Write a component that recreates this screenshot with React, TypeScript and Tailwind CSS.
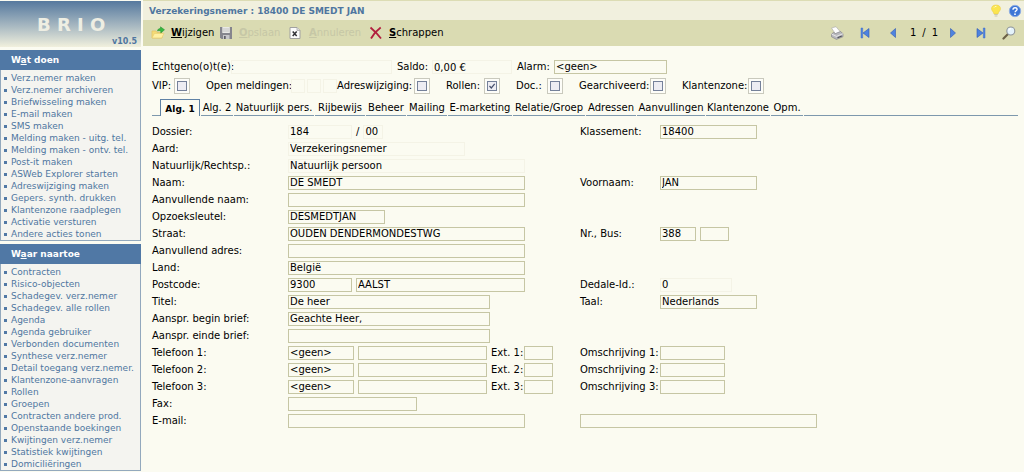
import type { ReactNode } from "react";
import { clsx } from "clsx";

const actions = [
  "Verz.nemer maken",
  "Verz.nemer archiveren",
  "Briefwisseling maken",
  "E-mail maken",
  "SMS maken",
  "Melding maken - uitg. tel.",
  "Melding maken - ontv. tel.",
  "Post-it maken",
  "ASWeb Explorer starten",
  "Adreswijziging maken",
  "Gepers. synth. drukken",
  "Klantenzone raadplegen",
  "Activatie versturen",
  "Andere acties tonen",
];

const destinations = [
  "Contracten",
  "Risico-objecten",
  "Schadegev. verz.nemer",
  "Schadegev. alle rollen",
  "Agenda",
  "Agenda gebruiker",
  "Verbonden documenten",
  "Synthese verz.nemer",
  "Detail toegang verz.nemer.",
  "Klantenzone-aanvragen",
  "Rollen",
  "Groepen",
  "Contracten andere prod.",
  "Openstaande boekingen",
  "Kwijtingen verz.nemer",
  "Statistiek kwijtingen",
  "Domiciliëringen",
];

const tabs = [
  { label: "Alg. 2", width: "w-8" },
  { label: "Natuurlijk pers.", width: "w-20" },
  { label: "Rijbewijs", width: "w-[50px]" },
  { label: "Beheer", width: "w-10" },
  { label: "Mailing", width: "w-10" },
  { label: "E-marketing", width: "w-16" },
  { label: "Relatie/Groep", width: "w-[72px]" },
  { label: "Adressen", width: "w-[50px]" },
  { label: "Aanvullingen", width: "w-[68px]" },
  { label: "Klantenzone", width: "w-16" },
  { label: "Opm.", width: "w-8" },
];

function Menu({ title, items }: { title: ReactNode; items: string[] }) {
  return (
    <nav className="border border-[#93a9bd] bg-[#f4f4f0]">
      <h2 className="-mx-px -mt-px h-5 bg-[#5078a5] pl-[11px] text-[9px] leading-5 font-bold text-white">{title}</h2>
      <ul className="pt-0.5 pl-[3px]">
        {items.map((item) => (
          <li key={item} className="flex h-3 items-center gap-1 text-[9px] whitespace-nowrap">
            <span className="size-[3px] shrink-0 bg-[#5078a5]" />
            <a href="#" className="leading-3 text-[#4f76a0]">
              {item}
            </a>
          </li>
        ))}
      </ul>
    </nav>
  );
}

function Field({ id, label, value = "", width, faint }: { id: string; label?: string; value?: string; width: string; faint?: boolean }) {
  return (
    <input
      id={id}
      aria-label={label}
      defaultValue={value}
      readOnly={faint}
      className={clsx(
        "h-3.5 shrink-0 border bg-transparent px-px leading-3 text-black outline-none",
        faint ? "border-[#f4f3e6]" : "border-[#c6c6a4]",
        width,
      )}
    />
  );
}

function Choice({ id, label, width }: { id: string; label?: string; width: string }) {
  return (
    <select
      id={id}
      aria-label={label}
      className={clsx("h-3.5 shrink-0 appearance-none border border-[#c6c6a4] bg-transparent px-px leading-3 text-black", width)}
    >
      <option>&lt;geen&gt;</option>
    </select>
  );
}

function Check({ id, label, width, checked }: { id: string; label: string; width: string; checked?: boolean }) {
  return (
    <div className="flex shrink-0 items-center">
      <label htmlFor={id} className={width}>
        {label}
      </label>
      <span className="relative flex size-4 items-center justify-center border border-[#c9c9bd] bg-[#fdfdf8]">
        <input id={id} type="checkbox" defaultChecked={checked} className="peer size-2.5 appearance-none border border-[#75819a] bg-[#ededf3]" />
        <svg viewBox="0 0 10 10" className="pointer-events-none absolute hidden size-2.5 peer-checked:block" fill="none" stroke="#46506e" strokeWidth="1.2">
          <path d="M2.500 5l1.800 2L7.700 2.800" />
        </svg>
      </span>
    </div>
  );
}

function Row({ label, htmlFor, children, rightLabel, rightFor, right }: {
  label: string;
  htmlFor: string;
  children: ReactNode;
  rightLabel?: string;
  rightFor?: string;
  right?: ReactNode;
}) {
  return (
    <div className="grid h-[17px] grid-cols-[136px_292px_80px_1fr] items-center">
      <label htmlFor={htmlFor}>{label}</label>
      <div className="flex items-center gap-1">{children}</div>
      {rightLabel && <label htmlFor={rightFor}>{rightLabel}</label>}
      {right && <div className={clsx("flex items-center gap-1", !rightLabel && "col-span-2")}>{right}</div>}
    </div>
  );
}

function PhoneRow({ n }: { n: number }) {
  return (
    <Row
      label={`Telefoon ${n}:`}
      htmlFor={`tel-type-${n}`}
      rightLabel={`Omschrijving ${n}:`}
      rightFor={`tel-desc-${n}`}
      right={<Field id={`tel-desc-${n}`} width="w-[65px]" />}
    >
      <Choice id={`tel-type-${n}`} width="w-[66px]" />
      <Field id={`tel-${n}`} label={`Nummer ${n}`} width="w-[129px]" />
      <label htmlFor={`ext-${n}`} className="w-[29px] whitespace-nowrap">
        Ext. {n}:
      </label>
      <Field id={`ext-${n}`} width="w-[29px]" />
    </Row>
  );
}

function EditIcon() {
  return (
    <svg viewBox="0 0 14 14" className="size-3.5">
      <path d="M1 5h4l1 1.500h5V12H1z" fill="#f6dc78" stroke="#e2c260" strokeWidth=".7" />
      <path d="M1 12l2.400-4.600H13L10.700 12z" fill="#fff0a2" stroke="#e6ca6c" strokeWidth=".6" />
      <path d="M6.500 5C7 2.900 8 2.300 9.500 2.500V.8l4 3L9.800 7V5C8.500 4.500 7.500 4.500 6.500 5z" fill="#35b83e" stroke="#258c31" strokeWidth=".5" />
    </svg>
  );
}

function SaveIcon() {
  return (
    <svg viewBox="0 0 14 14" className="size-3.5">
      <path d="M1 1h12v12H2.500L1 11.500z" fill="#85858d" />
      <path d="M3.300 1h7.500v6H3.300z" fill="#e9e9e6" />
      <path d="M4 3h6M4 5h6" stroke="#b5b5b5" strokeWidth=".7" />
      <path d="M4 9h6.500v4H4z" fill="#c6c6c9" />
      <path d="M5 10h1.700v3H5z" fill="#5e5e66" />
    </svg>
  );
}

function CancelIcon() {
  return (
    <svg viewBox="0 0 12 14" className="h-3.5 w-3">
      <path d="M1 1.500h7l3 3v8H1z" fill="#fbfbfb" stroke="#a1a1a1" />
      <path d="M8 1.500v3h3" fill="#ddd" stroke="#a1a1a1" strokeWidth=".7" />
      <path d="M3.700 5.500l4 4.500M7.700 5.500l-4 4.500" stroke="#303035" strokeWidth="1.500" />
    </svg>
  );
}

function DeleteIcon() {
  return (
    <svg viewBox="0 0 14 14" className="size-3.5" fill="none">
      <path d="M1.500 1.500C5 4.500 9 8.500 12 12.500M11.700 1.500C7.500 4.500 4.500 8 2 12.500" stroke="#b11f3e" strokeWidth="1.800" />
    </svg>
  );
}

function PrintIcon() {
  return (
    <svg viewBox="0 0 14 14" className="size-3.5">
      <path d="M1.500 2l4.500-1.300 4.500 5.300-5 2z" fill="#fdfdfd" stroke="#aaa" strokeWidth=".6" />
      <path d="M1.500 8l2-1.500L5.500 7.500l5-2 2.500 2.200v3L6.500 13.400l-5-2.600z" fill="#b9b9be" stroke="#7c7c84" strokeWidth=".6" />
      <path d="M1.500 8l5 2.400L13 7.700" fill="none" stroke="#f1f1f1" strokeWidth=".8" />
      <path d="M7.500 11.700l4.300-1.800" stroke="#4c4c55" strokeWidth="1.100" />
    </svg>
  );
}

// mirrored versions share the same shapes
function ArrowIcon({ bar, back }: { bar?: boolean; back?: boolean }) {
  return (
    <svg viewBox="0 0 10 12" className={clsx("h-3 w-2.5", back && "-scale-x-100")}>
      <path d={bar ? "M1 1.500l6 4.500-6 4.500z" : "M2.500 1.500l5 4.500-5 4.500z"} fill="#4d83df" stroke="#2f58b4" strokeWidth=".6" />
      {bar && <path d="M7.300 1H9v10H7.300z" fill="#4d83df" stroke="#3f6dc8" strokeWidth=".5" />}
    </svg>
  );
}

function SearchIcon() {
  return (
    <svg viewBox="0 0 14 14" className="size-3.5">
      <path d="M6 8L1.500 12.500" stroke="#6b6046" strokeWidth="2.200" strokeLinecap="round" />
      <circle cx="8.800" cy="5" r="4" fill="#e4f3fb" stroke="#8f959b" strokeWidth="1.100" />
      <path d="M6.700 4.700c.3-1.300 1.300-2 2.400-2" fill="none" stroke="#fff" strokeWidth="1.200" />
    </svg>
  );
}

function BulbIcon() {
  return (
    <svg viewBox="0 0 12 14" className="h-3.5 w-3">
      <path d="M6 1c3 0 4.500 1.700 4.500 3.700C10.500 6.700 8.500 7.500 8 10H4C3.500 7.500 1.500 6.700 1.500 4.700 1.500 2.700 3 1 6 1z" fill="#fbe54f" stroke="#ebcf4a" strokeWidth=".6" />
      <path d="M4 3.600C4.500 2.700 5.300 2.300 6.500 2.300" fill="none" stroke="#fffbc4" />
      <path d="M4.300 10.500h3.400M4.600 12h2.800" stroke="#cbc7ab" />
    </svg>
  );
}

function HelpIcon() {
  return (
    <svg viewBox="0 0 14 14" className="size-3.5">
      <circle cx="7" cy="7" r="5.700" fill="#3d76d6" stroke="#8faee2" />
      <path d="M5 5.700C5 4.300 6 3.700 7.100 3.700c1.200 0 2 .7 2 1.600 0 1.400-1.900 1.500-2 3" fill="none" stroke="#fff" strokeWidth="1.400" />
      <circle cx="7" cy="10.200" r=".9" fill="#fff" />
    </svg>
  );
}

function Tool({ icon, letter, rest, width, disabled }: { icon: ReactNode; letter: string; rest: string; width: string; disabled?: boolean }) {
  return (
    <button type="button" disabled={disabled} className={clsx("flex shrink-0 items-center text-left whitespace-nowrap", disabled ? "text-[#c6c7a6]" : "text-black", width)}>
      <span className="w-5">{icon}</span>
      <span>
        <b className="underline">{letter}</b>
        {rest}
      </span>
    </button>
  );
}

export default function App() {
  return (
    <div className="flex min-h-screen items-stretch bg-[#fbfbf1] font-['DejaVu_Sans',Verdana,sans-serif] text-[10px] leading-3 text-black">
      <aside className="flex w-[141px] shrink-0 flex-col gap-[3px] pt-px">
        <header className="flex h-[46px] flex-col bg-linear-to-b from-[#56799e] to-[#f1f0dd] pt-3">
          <div className="pl-[37px] text-[18px] leading-6 font-bold text-[#eeeee3]">B R I O</div>
          <div className="-mt-px pr-1 text-right text-[8px] leading-3 font-bold text-[#4f76a0]">v10.5</div>
        </header>
        <div className="flex flex-col gap-[3px]">
          <Menu title={<>W<u>a</u>t doen</>} items={actions} />
          <Menu title={<>W<u>a</u>ar naartoe</>} items={destinations} />
        </div>
      </aside>

      <main className="ml-0.5 min-w-0 flex-1">
        <div className="flex h-5 items-center justify-between border-t border-[#dcdcb4] bg-[#f1f0de] pr-0.5 pl-1.5">
          <h1 className="text-[9px] font-bold text-[#4f76a0]">Verzekeringsnemer : 18400 DE SMEDT JAN</h1>
          <div className="flex gap-1.5">
            <button type="button" aria-label="Tip"><BulbIcon /></button>
            <button type="button" aria-label="Help"><HelpIcon /></button>
          </div>
        </div>

        <div className="flex h-[26px] items-center justify-between bg-[#dadbb2] px-2">
          <div className="flex">
            <Tool icon={<EditIcon />} letter="W" rest="ijzigen" width="w-[68px]" />
            <Tool icon={<SaveIcon />} letter="O" rest="pslaan" width="w-[70px]" disabled />
            <Tool icon={<CancelIcon />} letter="A" rest="nnuleren" width="w-20" disabled />
            <Tool icon={<DeleteIcon />} letter="S" rest="chrappen" width="w-20" />
          </div>
          <div className="flex items-center">
            <button type="button" aria-label="Afdrukken" className="w-[30px]"><PrintIcon /></button>
            <button type="button" aria-label="Eerste" className="w-7"><ArrowIcon bar back /></button>
            <button type="button" aria-label="Vorige" className="w-[22px]"><ArrowIcon back /></button>
            <span className="mr-2.5 flex w-7 justify-between">
              <span>1</span>
              <span>/</span>
              <span>1</span>
            </span>
            <button type="button" aria-label="Volgende" className="w-7"><ArrowIcon /></button>
            <button type="button" aria-label="Laatste" className="w-[26px]"><ArrowIcon bar /></button>
            <button type="button" aria-label="Zoeken"><SearchIcon /></button>
          </div>
        </div>

        <form className="pt-3.5 pr-1.5 pl-[9px]">
          <div className="flex h-3.5 items-center whitespace-nowrap">
            <label htmlFor="spouse" className="w-[79px]">Echtgeno(o)t(e):</label>
            <Field id="spouse" width="w-[161px]" faint />
            <label htmlFor="balance" className="ml-[5px] w-[35px]">Saldo:</label>
            <Field id="balance" value="0,00 €" width="w-20" faint />
            <label htmlFor="alarm" className="ml-[5px] w-[37px]">Alarm:</label>
            <Choice id="alarm" width="w-[113px]" />
          </div>

          <div className="mt-1 flex h-4 items-center gap-4 whitespace-nowrap">
            <Check id="vip" label="VIP:" width="w-[22px]" />
            <div className="flex w-[115px] items-center gap-0.5">
              <span className="w-[83px]">Open meldingen:</span>
              <Field id="open-1" label="Open meldingen 1" width="w-3.5" faint />
              <Field id="open-2" label="Open meldingen 2" width="w-3.5" faint />
              <Field id="open-3" label="Open meldingen 3" width="w-3.5" faint />
            </div>
            <Check id="address-change" label="Adreswijziging:" width="w-[77px]" />
            <Check id="roles" label="Rollen:" width="w-[38px]" checked />
            <Check id="doc" label="Doc.:" width="w-[31px]" />
            <Check id="archived" label="Gearchiveerd:" width="w-[71px]" />
            <Check id="client-zone" label="Klantenzone:" width="w-[66px]" />
          </div>

          <div role="tablist" className="mt-[5px] flex h-[17px] items-stretch gap-px whitespace-nowrap">
            <span className="-mr-px w-2 border-b border-[#7d98ad]" />
            <button type="button" role="tab" aria-selected="true" className="w-10 border border-b-0 border-[#5f82a5] pt-0.5 text-[9px] font-bold">
              Alg. 1
            </button>
            {tabs.map((tab) => (
              <button
                key={tab.label}
                type="button"
                role="tab"
                aria-selected="false"
                className={clsx("flex shrink-0 items-center justify-center border-b border-[#7d98ad] pt-0.5", tab.width)}
              >
                {tab.label}
              </button>
            ))}
            <span className="flex-1 border-b border-[#7d98ad]" />
          </div>

          <div role="tabpanel" className="pt-[7px]">
            <Row label="Dossier:" htmlFor="file" rightLabel="Klassement:" rightFor="filing" right={<Field id="filing" value="18400" width="w-[97px]" />}>
              <Field id="file" value="184" width="w-16" faint />
              <span>/</span>
              <Field id="file-sub" label="Dossier volgnummer" value="00" width="w-5" faint />
            </Row>
            <Row label="Aard:" htmlFor="kind">
              <Field id="kind" value="Verzekeringsnemer" width="w-[177px]" faint />
            </Row>
            <Row label="Natuurlijk/Rechtsp.:" htmlFor="person">
              <Field id="person" value="Natuurlijk persoon" width="w-[237px]" faint />
            </Row>
            <Row label="Naam:" htmlFor="name" rightLabel="Voornaam:" rightFor="first-name" right={<Field id="first-name" value="JAN" width="w-[97px]" />}>
              <Field id="name" value="DE SMEDT" width="w-[237px]" />
            </Row>
            <Row label="Aanvullende naam:" htmlFor="extra-name">
              <Field id="extra-name" width="w-[237px]" />
            </Row>
            <Row label="Opzoeksleutel:" htmlFor="key">
              <Field id="key" value="DESMEDTJAN" width="w-[97px]" />
            </Row>
            <Row
              label="Straat:"
              htmlFor="street"
              rightLabel="Nr., Bus:"
              rightFor="number"
              right={
                <>
                  <Field id="number" value="388" width="w-9" />
                  <Field id="box" label="Bus" width="w-[29px]" />
                </>
              }
            >
              <Field id="street" value="OUDEN DENDERMONDESTWG" width="w-[237px]" />
            </Row>
            <Row label="Aanvullend adres:" htmlFor="extra-address">
              <Field id="extra-address" width="w-[237px]" />
            </Row>
            <Row label="Land:" htmlFor="country">
              <Field id="country" value="België" width="w-[237px]" />
            </Row>
            <Row label="Postcode:" htmlFor="zip" rightLabel="Dedale-Id.:" rightFor="dedale" right={<Field id="dedale" value="0" width="w-[72px]" faint />}>
              <Field id="zip" value="9300" width="w-16" />
              <Field id="city" label="Gemeente" value="AALST" width="w-[169px]" />
            </Row>
            <Row label="Titel:" htmlFor="title" rightLabel="Taal:" rightFor="language" right={<Field id="language" value="Nederlands" width="w-[97px]" />}>
              <Field id="title" value="De heer" width="w-[202px]" />
            </Row>
            <Row label="Aanspr. begin brief:" htmlFor="opening">
              <Field id="opening" value="Geachte Heer," width="w-[202px]" />
            </Row>
            <Row label="Aanspr. einde brief:" htmlFor="closing">
              <Field id="closing" width="w-[202px]" />
            </Row>
            <PhoneRow n={1} />
            <PhoneRow n={2} />
            <PhoneRow n={3} />
            <Row label="Fax:" htmlFor="fax">
              <Field id="fax" width="w-[129px]" />
            </Row>
            <Row label="E-mail:" htmlFor="email" right={<Field id="email-2" label="E-mail 2" width="w-[237px]" />}>
              <Field id="email" width="w-[237px]" />
            </Row>
          </div>
        </form>
      </main>
    </div>
  );
}
